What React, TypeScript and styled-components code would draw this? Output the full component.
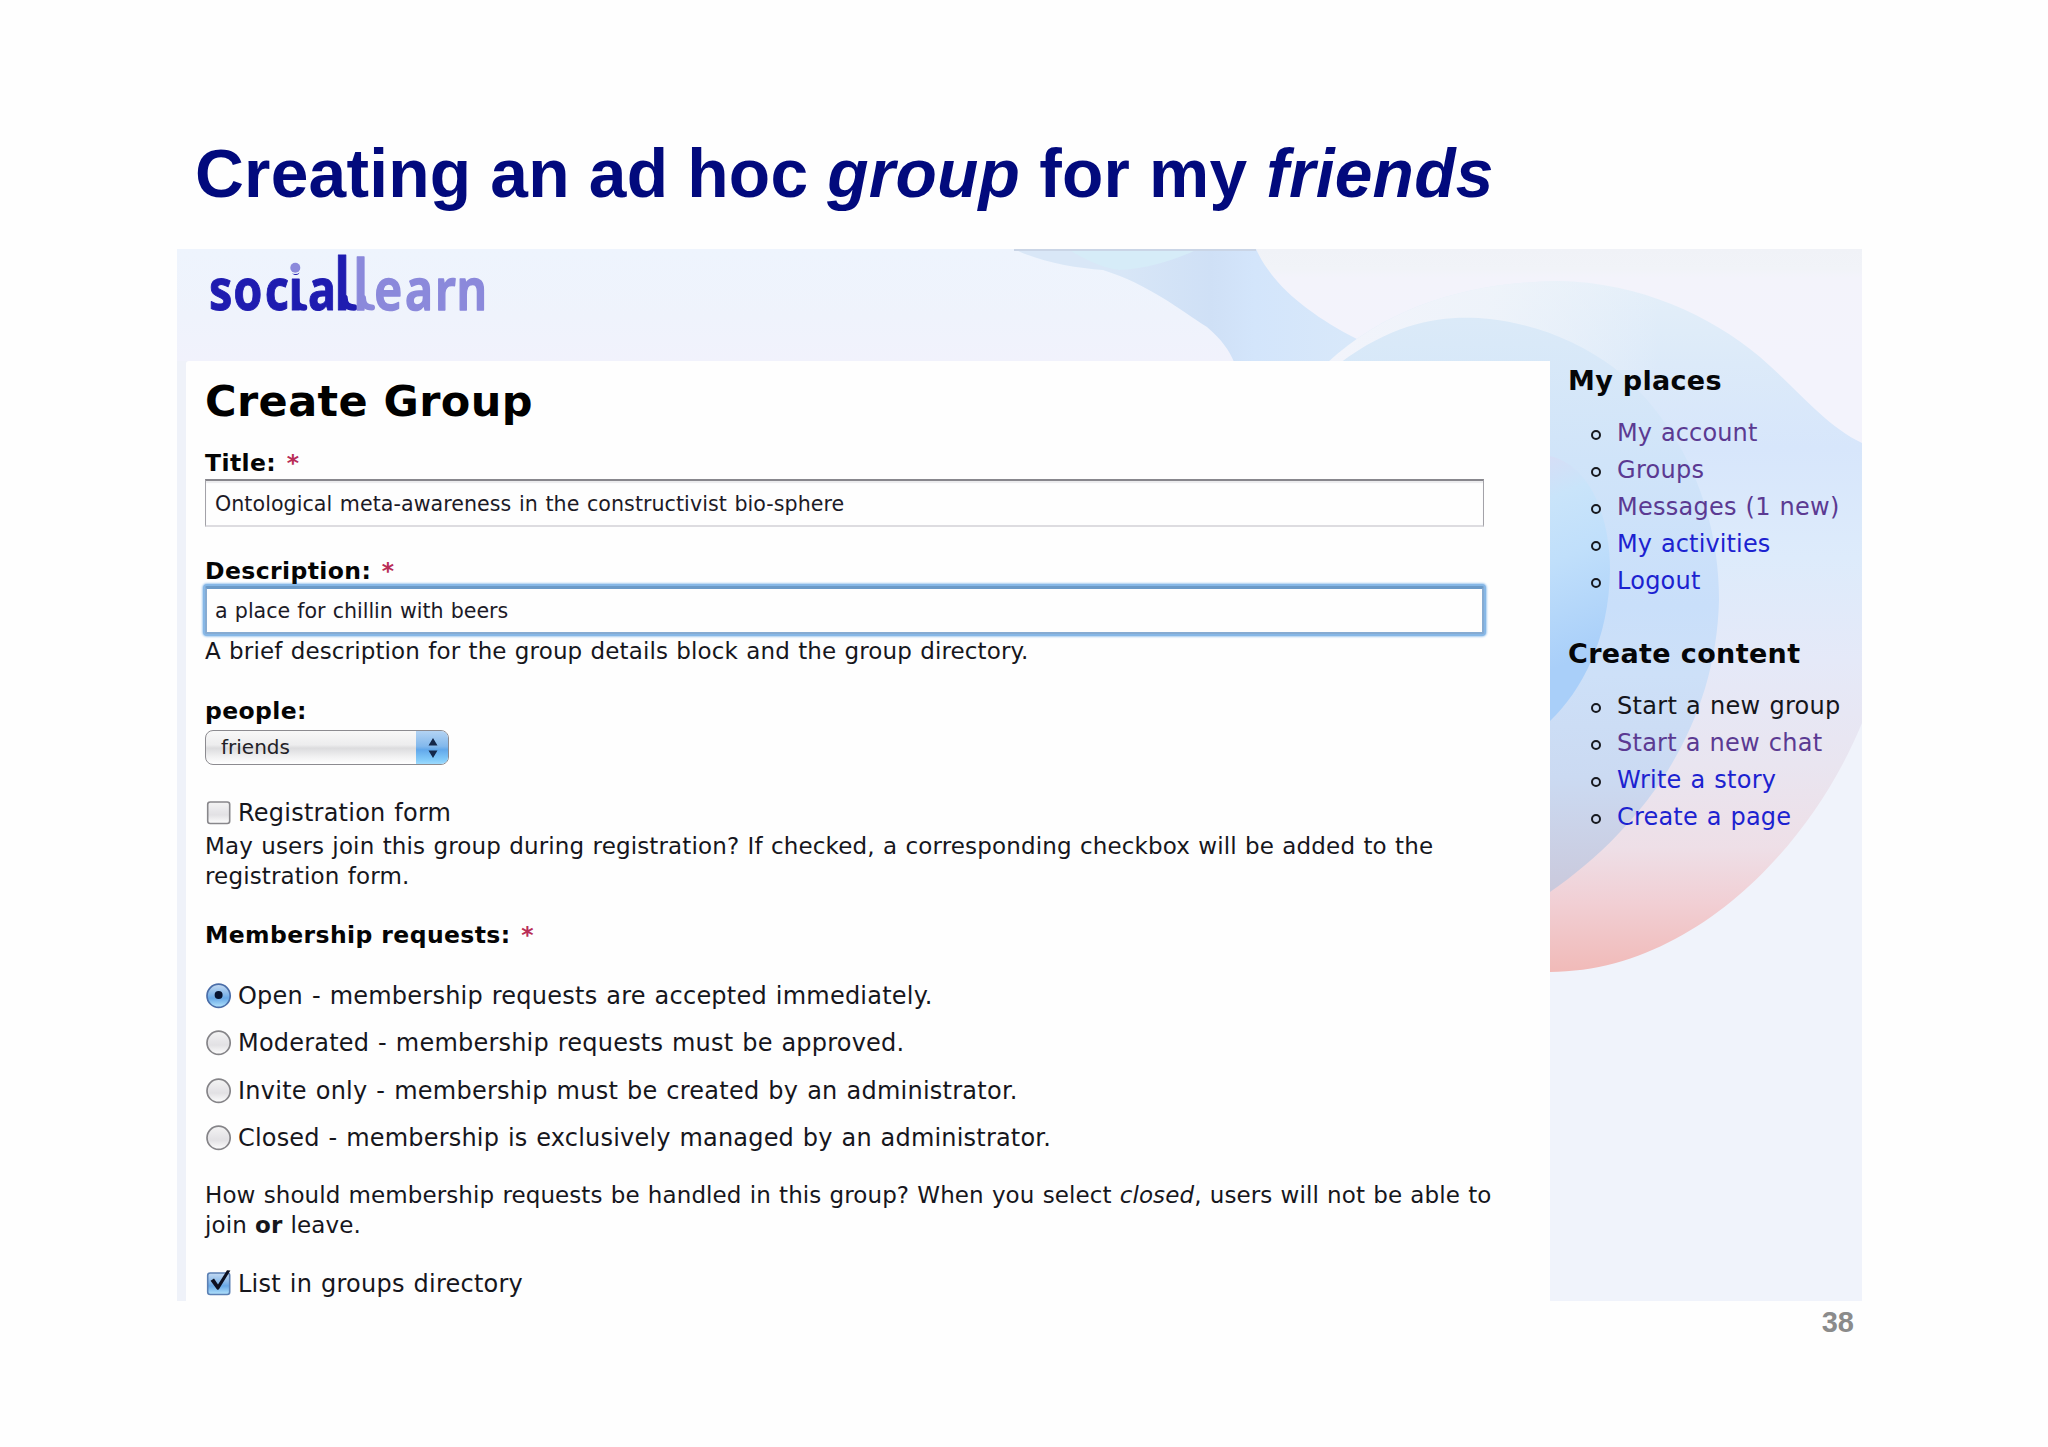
import React from 'react';
import styled, { createGlobalStyle, css } from 'styled-components';

const verdana = "'DejaVu Sans', Verdana, sans-serif";
const arial = "'Liberation Sans', Arial, sans-serif";

const GlobalStyle = createGlobalStyle`
  *, *::before, *::after { box-sizing: border-box; }
  body { margin: 0; background: #fefefe; }
  h1, h2, p, ul { margin: 0; padding: 0; }
`;

type Track = { $track?: number; $space?: number };
const tracking = css<Track>`
  letter-spacing: ${(p) => p.$track ?? 0}px;
  word-spacing: ${(p) => p.$space ?? 0}px;
  white-space: nowrap;
`;

const Slide = styled.main`
  width: 2048px;
  height: 1447px;
  overflow: hidden;
  padding: 135.5px 186px 0 177px;
  display: flex;
  flex-direction: column;
`;

const SlideTitle = styled.h1`
  margin: 0 0 37.5px 18px;
  font: bold 67.7px/76px ${arial};
  color: #020a7d;
  ${tracking}
`;

const Site = styled.section`
  position: relative;
  width: 1685px;
  height: 1052px;
  display: flex;
  flex-direction: column;
  background: #f0f2fb;
`;

const Backdrop = styled.svg`
  position: absolute;
  inset: 0;
`;

const Header = styled.header`
  position: relative;
  height: 112px;
  padding-left: 28px;
`;

const LogoMark = styled.svg`
  display: block;
  overflow: visible;
`;

const Columns = styled.div`
  position: relative;
  flex: 1;
  display: flex;
  padding-left: 9px;
`;

const Card = styled.form`
  width: 1364px;
  padding: 15px 66px 0 19px;
  background: #fefefe;
  border-top-left-radius: 3px;
  font-family: ${verdana};
  color: #16161c;
`;

const Heading = styled.h1`
  font: bold 43px/50px ${verdana};
  color: #000;
  ${tracking}
`;

const Label = styled.div<{ $top: number }>`
  margin-top: ${(p) => p.$top}px;
  font: bold 23.5px/30px ${verdana};
  letter-spacing: 0.4px;
  white-space: nowrap;
  color: #050505;
`;

const Star = styled.span`
  color: #b92d57;
  margin-left: 2px;
`;

const Field = styled.input<Track & { $focus?: boolean }>`
  display: block;
  width: 1279px;
  height: 48px;
  margin-top: 1px;
  padding: 2px 0 0 9px;
  border: 1px solid #a3a2a8;
  border-top: 2px solid #88878d;
  border-bottom: 2px solid #dddce0;
  outline: none;
  border-radius: 0;
  background: #fefefe;
  box-shadow: inset 0 2px 1px #ececee;
  font: 20.6px/30px ${verdana};
  color: #1c1a26;
  ${tracking}
  ${(p) =>
    p.$focus &&
    css`
      margin-top: 0;
      border: 2px solid #86abd2;
      border-top: 3px solid #6b9ac8;
      padding: 2px 0 0 8px;
      border-radius: 2px;
      box-shadow: 0 0 0 2px #86b7e6, 0 0 2px 3px #a9cdf0;
    `}
`;

const Help = styled.p<{ $top: number }>`
  margin-top: ${(p) => p.$top}px;
  font: 23px/30.3px ${verdana};
`;

const Line = styled.span<Track>`
  display: block;
  ${tracking}
`;

const Select = styled.button`
  display: flex;
  align-items: stretch;
  justify-content: space-between;
  width: 244px;
  height: 35px;
  margin: 4.5px 0 0;
  padding: 0 0 0 15px;
  overflow: hidden;
  border: 1.5px solid #8c8b90;
  border-radius: 8px;
  background: linear-gradient(#f8f8f8, #ededee 42%, #dcdcde 52%, #f1f1f2 78%, #fff);
  font: 20px/33px ${verdana};
  color: #222126;
`;

const Stepper = styled.span`
  display: grid;
  place-items: center;
  width: 33px;
  margin: -1px -1px -1px 0;
  border-top: 1.5px solid #4a63b4;
  background: linear-gradient(#b3d3f3, #82b8ec 45%, #62a8ea 55%, #83cbfa 85%, #a4defd);
`;

const Choice = styled.label<Track & { $top?: number; $height: number }>`
  display: flex;
  align-items: center;
  gap: 6px;
  height: ${(p) => p.$height}px;
  margin-top: ${(p) => p.$top ?? 0}px;
  font-size: 24px;
  line-height: 30px;
  ${tracking}
`;

const RadioGroup = styled.div`
  margin-top: 22.5px;
`;

const Sidebar = styled.aside`
  flex: 1;
  padding: 2.5px 0 0 18px;
  font-family: ${verdana};
`;

const BlockTitle = styled.h2<Track & { $top?: number }>`
  margin-top: ${(p) => p.$top ?? 0}px;
  font: bold 27px/34px ${verdana};
  color: #050608;
  ${tracking}
`;

const Menu = styled.ul`
  margin-top: 17px;
  list-style: none;
`;

const MenuItem = styled.li<Track & { $color: string }>`
  display: flex;
  align-items: center;
  gap: 16px;
  height: 36.9px;
  padding-left: 23px;
  font-size: 24px;
  line-height: 36px;
  color: ${(p) => p.$color};
  ${tracking}
  &::before {
    content: '';
    width: 10px;
    height: 10px;
    margin-top: 4px;
    border: 2.5px solid #17191f;
    border-radius: 50%;
  }
`;

const PageNumber = styled.footer`
  align-self: flex-end;
  margin: 4px 8px 0 0;
  font: bold 29px/34px ${arial};
  color: #8b8b8b;
`;

const dark = '#1f1cb0';
const light = '#8b89db';

const Logo = () => (
  <LogoMark width="300" height="80" viewBox="205 249 300 80" fontFamily="'Noto Sans', sans-serif">
    <g fontWeight="700" fill={dark} stroke={dark} strokeLinejoin="round" strokeLinecap="round">
      <text transform="translate(0 310) scale(.82 1)" x="255 284.500 323 352 375.500" fontSize="57" strokeWidth="1">socia</text>
      <text transform="translate(0 310) scale(.72 1)" x="464.500" fontSize="71" strokeWidth="1">l</text>
      <path d="M344.500 298Q344.500 307.500 354 307.500M296 298Q296 307.500 304 307.500" fill="none" strokeWidth="6.500" />
    </g>
    <g fontWeight="600" fill={light} stroke={light} strokeLinejoin="round" strokeLinecap="round">
      <text transform="translate(0 310) scale(.76 1)" x="464.500" fontSize="71" strokeWidth="1.400">l</text>
      <text transform="translate(0 310) scale(.84 1)" x="445.500 482 518 543.500" fontSize="57" strokeWidth="1.600">earn</text>
      <path d="M363 298Q363 307.500 372 307.500" fill="none" strokeWidth="6" />
    </g>
    <circle cx="295.300" cy="267.500" r="6.600" fill="#eef4fd" />
    <circle cx="295.300" cy="267.800" r="5" fill={light} />
  </LogoMark>
);

const Waves = () => (
  <Backdrop width="1685" height="1052" viewBox="177 249 1685 1052">
    <defs>
      <linearGradient id="sky" x1="0" y1="0" x2="0" y2="1">
        <stop offset="0" stopColor="#eef4fd" />
        <stop offset=".6" stopColor="#eff3fc" />
        <stop offset="1" stopColor="#f1f2fc" />
      </linearGradient>
      <linearGradient id="grey" gradientUnits="userSpaceOnUse" x1="0" y1="249" x2="0" y2="361">
        <stop offset="0" stopColor="#f0f2f7" />
        <stop offset=".18" stopColor="#f1f3f8" />
        <stop offset=".25" stopColor="#f3f3fb" />
        <stop offset="1" stopColor="#f3f3fc" />
      </linearGradient>
      <linearGradient id="band" gradientUnits="userSpaceOnUse" x1="1110" y1="0" x2="1350" y2="0">
        <stop offset="0" stopColor="#d9e7f7" />
        <stop offset=".42" stopColor="#cfe0f6" />
        <stop offset=".6" stopColor="#d3e5fb" />
        <stop offset="1" stopColor="#d8e8fa" />
      </linearGradient>
      <linearGradient id="outer" gradientUnits="userSpaceOnUse" x1="0" y1="281" x2="0" y2="972">
        <stop offset="0" stopColor="#e4eff9" />
        <stop offset=".12" stopColor="#dceaf9" />
        <stop offset=".24" stopColor="#d7e6fb" />
        <stop offset=".4" stopColor="#ddebfb" />
        <stop offset=".55" stopColor="#e5e9f8" />
        <stop offset=".7" stopColor="#e9e5f0" />
        <stop offset=".82" stopColor="#eedfe7" />
        <stop offset=".9" stopColor="#f1cfd4" />
        <stop offset="1" stopColor="#f1bab8" />
      </linearGradient>
      <linearGradient id="mist" gradientUnits="userSpaceOnUse" x1="1330" y1="0" x2="1660" y2="0">
        <stop offset="0" stopColor="#f2f4fb" />
        <stop offset=".5" stopColor="#f0f4fa" stopOpacity=".85" />
        <stop offset="1" stopColor="#f0f4fa" stopOpacity="0" />
      </linearGradient>
      <linearGradient id="middle" gradientUnits="userSpaceOnUse" x1="0" y1="318" x2="0" y2="892">
        <stop offset="0" stopColor="#dbeaf8" />
        <stop offset=".25" stopColor="#d0e4f9" />
        <stop offset=".5" stopColor="#c9dffa" />
        <stop offset=".62" stopColor="#cde0f8" />
        <stop offset=".8" stopColor="#cbdaf2" />
        <stop offset="1" stopColor="#cac9dc" />
      </linearGradient>
      <linearGradient id="inner" gradientUnits="userSpaceOnUse" x1="1550" y1="455" x2="1625" y2="640">
        <stop offset="0" stopColor="#d6def6" />
        <stop offset=".2" stopColor="#c9e4fa" />
        <stop offset=".5" stopColor="#c0dffb" />
        <stop offset="1" stopColor="#a9cff9" />
      </linearGradient>
    </defs>
    <rect x="177" y="249" width="1100" height="112" fill="url(#sky)" />
    <rect x="177" y="361" width="12" height="940" fill="#eff2f9" />
    <path d="M1240 249H1862V1000H1240Z" fill="url(#grey)" />
    <path d="M1550 700H1862V1301H1550Z" fill="#f0f3fb" />
    <path d="M1014 249C1040 262 1075 268 1103 270C1150 285 1180 310 1207 327C1222 340 1229 350 1234 362H1330L1357 339C1310 315 1272 285 1256 249Z" fill="url(#band)" />
    <path d="M1068 249C1085 260 1103 268 1120 270C1150 268 1175 260 1198 249Z" fill="#d6ecf8" />
    <path d="M1014 250H1256" stroke="#cad5e6" strokeWidth="2" />
    <path d="M1327 363C1390 305 1470 282 1560 281C1640 283 1710 315 1760 357C1800 392 1825 425 1862 443V723C1810 850 1690 972 1550 972V363Z" fill="url(#outer)" />
    <path d="M1327 363C1390 305 1470 282 1560 281C1590 281 1630 288 1660 298V370H1327Z" fill="url(#mist)" />
    <path d="M1340 363C1400 318 1450 315 1490 319C1540 325 1580 343 1613 367C1690 430 1719 520 1719 600C1716 730 1640 830 1550 892V363Z" fill="url(#middle)" />
    <path d="M1550 456C1592 466 1610 520 1610 570C1609 640 1582 690 1550 721Z" fill="url(#inner)" />
  </Backdrop>
);

const GlossDefs = () => (
  <defs>
    <linearGradient id="gloss" x1="0" y1="0" x2="0" y2="1">
      <stop offset="0" stopColor="#f4f4f4" />
      <stop offset=".45" stopColor="#e6e5e8" />
      <stop offset=".6" stopColor="#e2e1e4" />
      <stop offset="1" stopColor="#fdfdfd" />
    </linearGradient>
    <linearGradient id="blueGloss" x1="0" y1="0" x2="0" y2="1">
      <stop offset="0" stopColor="#c4daf2" />
      <stop offset=".45" stopColor="#84b6e8" />
      <stop offset=".6" stopColor="#68a8e6" />
      <stop offset="1" stopColor="#b4e4fd" />
    </linearGradient>
  </defs>
);

const CheckboxIcon = ({ checked }: { checked?: boolean }) => (
  <svg width="27" height="32" viewBox="0 0 27 32">
    <GlossDefs />
    <rect x="2.7" y="5" width="22" height="21.5" rx="2.5" fill={checked ? 'url(#blueGloss)' : 'url(#gloss)'} stroke={checked ? '#5c80b4' : '#88878b'} strokeWidth="1.6" />
    {checked && <path d="M5.6 12.8 9 10.6 13 16.4 22 2.2 25.4 2.4 13.8 21.6 12.2 21.8Z" fill="#0d1020" />}
  </svg>
);

const RadioIcon = ({ checked }: { checked?: boolean }) => (
  <svg width="27" height="28" viewBox="0 0 27 28">
    <GlossDefs />
    <circle cx="13.6" cy="13.8" r="11.6" fill={checked ? 'url(#blueGloss)' : 'url(#gloss)'} stroke={checked ? '#4a6da8' : '#858488'} strokeWidth="1.7" />
    {checked && <circle cx="13.6" cy="13" r="4" fill="#081430" />}
  </svg>
);

const requests = [
  { text: 'Open - membership requests are accepted immediately.', checked: true, track: 0.23 },
  { text: 'Moderated - membership requests must be approved.', track: 0.21 },
  { text: 'Invite only - membership must be created by an administrator.', track: 0.25 },
  { text: 'Closed - membership is exclusively managed by an administrator.', track: 0.19 },
];

const visited = '#5b3a92';
const link = '#1c22d0';

const places = [
  { text: 'My account', color: visited, track: 0.13 },
  { text: 'Groups', color: visited, track: 0.3 },
  { text: 'Messages (1 new)', color: visited, track: 0.25 },
  { text: 'My activities', color: link, track: 0.13 },
  { text: 'Logout', color: link, track: 0.25 },
];

const content = [
  { text: 'Start a new group', color: '#15161c', track: 0.3 },
  { text: 'Start a new chat', color: visited, track: 0.25 },
  { text: 'Write a story', color: link, track: 0.25 },
  { text: 'Create a page', color: link, track: 0.2 },
];

export default function App() {
  return (
    <>
      <GlobalStyle />
      <Slide>
        <SlideTitle $track={0.22}>
          Creating an ad hoc <em>group</em> for my <em>friends</em>
        </SlideTitle>
        <Site>
          <Waves />
          <Header>
            <Logo />
          </Header>
          <Columns>
            <Card>
              <Heading $track={0.4}>Create Group</Heading>
              <Label $top={21.5}>Title: <Star>*</Star></Label>
              <Field defaultValue="Ontological meta-awareness in the constructivist bio-sphere" $space={1} $track={0.05} />
              <Label $top={29}>Description: <Star>*</Star></Label>
              <Field $focus defaultValue="a place for chillin with beers" $space={0.8} $track={-0.05} />
              <Help $top={2}>
                <Line $space={0.8} $track={0.13}>A brief description for the group details block and the group directory.</Line>
              </Help>
              <Label $top={30}>people:</Label>
              <Select type="button">
                friends
                <Stepper>
                  <svg width="12" height="20" viewBox="0 0 12 20">
                    <path d="M6 0 10.5 7.5H1.5ZM6 20 10.5 12.5H1.5Z" fill="#14284a" />
                  </svg>
                </Stepper>
              </Select>
              <Choice $top={32.5} $height={30} $space={1} $track={0.23}>
                <CheckboxIcon />
                Registration form
              </Choice>
              <Help $top={3}>
                <Line $space={0.8} $track={0.145}>May users join this group during registration? If checked, a corresponding checkbox will be added to the</Line>
                <Line $space={0.8} $track={0.15}>registration form.</Line>
              </Help>
              <Label $top={28.2}>Membership requests: <Star>*</Star></Label>
              <RadioGroup>
                {requests.map((r) => (
                  <Choice key={r.text} $height={47.4} $track={r.track} $space={1}>
                    <RadioIcon checked={r.checked} />
                    {r.text}
                  </Choice>
                ))}
              </RadioGroup>
              <Help $top={18.2}>
                <Line $space={0.8} $track={0.09}>How should membership requests be handled in this group? When you select <em>closed</em>, users will not be able to</Line>
                <Line $space={0.8} $track={0.1}>join <strong>or</strong> leave.</Line>
              </Help>
              <Choice $top={28.4} $height={30} $space={1} $track={0.24}>
                <CheckboxIcon checked />
                List in groups directory
              </Choice>
            </Card>
            <Sidebar>
              <BlockTitle $track={0.3}>My places</BlockTitle>
              <Menu>
                {places.map((i) => (
                  <MenuItem key={i.text} $color={i.color} $space={1} $track={i.track}>{i.text}</MenuItem>
                ))}
              </Menu>
              <BlockTitle $top={38} $track={0.36}>Create content</BlockTitle>
              <Menu>
                {content.map((i) => (
                  <MenuItem key={i.text} $color={i.color} $space={1} $track={i.track}>{i.text}</MenuItem>
                ))}
              </Menu>
            </Sidebar>
          </Columns>
        </Site>
        <PageNumber>38</PageNumber>
      </Slide>
    </>
  );
}
